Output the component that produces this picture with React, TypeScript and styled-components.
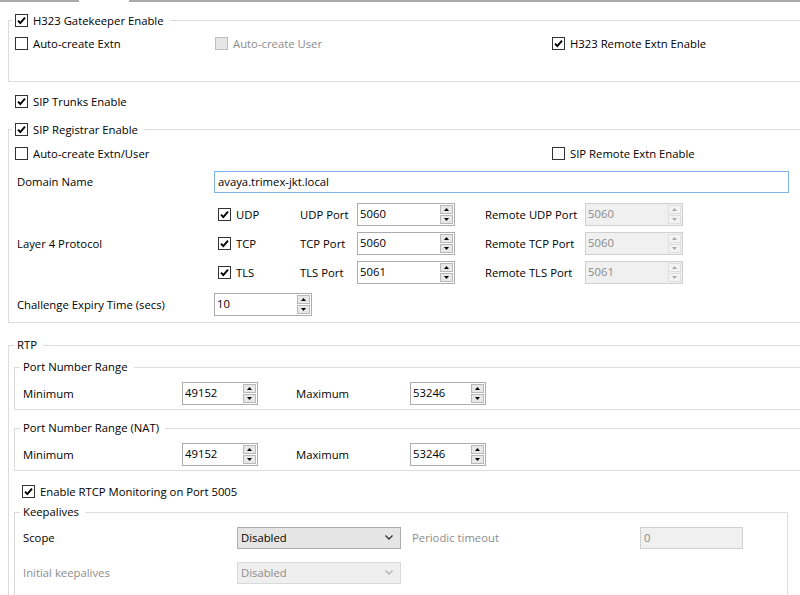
import { Fragment } from 'react';
import styled, { createGlobalStyle } from 'styled-components';

const GlobalStyle = createGlobalStyle`
  *, *::before, *::after {
    box-sizing: border-box;
  }

  html, body {
    margin: 0;
    padding: 0;
    background: #fff;
  }

  body {
    font-family: "Segoe UI", "Open Sans", "Noto Sans", sans-serif;
    font-size: 11.3px;
    color: #000;
    overflow: hidden;
  }
`;

const Page = styled.main`
  display: flex;
  flex-direction: column;
  width: 800px;
  height: 595px;
  overflow: hidden;
`;

const TabStrip = styled.div`
  display: flex;
  flex-shrink: 0;
  height: 2px;
`;

const TabLine = styled.div<{ $w?: number }>`
  height: 2px;
  background: #a9a9a9;
  ${(p) => (p.$w ? `width: ${p.$w}px;` : 'flex: 1;')}
`;

const TabGap = styled.div`
  width: 50px;
`;

/* group boxes */
const OuterGroup = styled.fieldset<{ $mt: number; $pt: number; $pb: number; $pl?: number }>`
  flex-shrink: 0;
  min-width: 0;
  margin: ${(p) => p.$mt}px -40px 0 8px;
  padding: ${(p) => p.$pt}px 0 ${(p) => p.$pb}px ${(p) => p.$pl ?? 6}px;
  border: 1px solid #dcdcdc;
`;

const InnerGroup = styled.fieldset<{ $mt: number; $pt: number; $pb: number; $w?: number }>`
  min-width: 0;
  margin: ${(p) => p.$mt}px 0 0 0;
  padding: ${(p) => p.$pt}px 0 ${(p) => p.$pb}px 8px;
  border: 1px solid #dcdcdc;
  ${(p) => (p.$w ? `width: ${p.$w}px;` : 'margin-right: -40px;')}
`;

const Legend = styled.legend<{ $flush?: boolean }>`
  margin-left: ${(p) => (p.$flush ? 0 : -3)}px;
  padding: 0 6px 0 3px;
  height: 16px;
  line-height: 15px;
`;

/* checkbox */
const CheckLabel = styled.label<{ $disabled?: boolean }>`
  display: inline-flex;
  align-items: center;
  gap: 5px;
  height: 16px;
  line-height: 15px;
  white-space: nowrap;
  color: ${(p) => (p.$disabled ? '#8c8c8c' : '#000')};
`;

const Box = styled.span<{ $disabled?: boolean }>`
  display: inline-flex;
  align-items: center;
  justify-content: center;
  width: 13px;
  height: 13px;
  flex-shrink: 0;
  border: 1px solid ${(p) => (p.$disabled ? '#bcbcbc' : '#333')};
  background: ${(p) => (p.$disabled ? '#e6e6e6' : '#fff')};
`;

function Check({ label, checked, disabled }: { label: string; checked?: boolean; disabled?: boolean }) {
  return (
    <CheckLabel $disabled={disabled}>
      <Box $disabled={disabled}>
        {checked && (
          <svg width="11" height="11" viewBox="0 0 11 11">
            <path d="M2 5.6 L4.3 8 L9 2.6" fill="none" stroke="#000" strokeWidth="1.9" />
          </svg>
        )}
      </Box>
      {label}
    </CheckLabel>
  );
}

/* rows */
const FreeRow = styled.div<{ $mt: number; $pl: number }>`
  display: flex;
  align-items: center;
  flex-shrink: 0;
  height: 16px;
  margin-top: ${(p) => p.$mt}px;
  padding-left: ${(p) => p.$pl}px;
`;

const GridRow = styled.div<{ $cols: string; $h: number; $mt?: number }>`
  display: grid;
  grid-template-columns: ${(p) => p.$cols};
  align-items: center;
  height: ${(p) => p.$h}px;
  margin-top: ${(p) => p.$mt ?? 0}px;
`;

const FieldLabel = styled.span<{ $indent?: number; $disabled?: boolean }>`
  padding-left: ${(p) => p.$indent ?? 0}px;
  padding-bottom: 1px;
  white-space: nowrap;
  color: ${(p) => (p.$disabled ? '#8c8c8c' : '#000')};
`;

const ProtocolGrid = styled.div`
  display: grid;
  grid-template-columns: 199px 86px 57px 98px 130px 98px;
  grid-template-rows: repeat(3, 23px);
  row-gap: 6px;
  align-items: center;
  margin-top: 10px;
`;

const ProtocolLabel = styled(FieldLabel)`
  grid-row: 1 / 4;
`;

const ProtoCheck = styled.div`
  padding-left: 4px;
`;

/* inputs */
const TextBox = styled.div<{ $w: number; $focus?: boolean; $disabled?: boolean }>`
  display: flex;
  align-items: center;
  width: ${(p) => p.$w}px;
  height: 22px;
  padding: 0 0 1px 3px;
  border: 1px solid ${(p) => (p.$focus ? '#7eb4ea' : p.$disabled ? '#d0d0d0' : '#a9a9a9')};
  background: ${(p) => (p.$disabled ? '#f0f0f0' : '#fff')};
  color: ${(p) => (p.$disabled ? '#8a8a8a' : '#000')};
`;

const SpinBox = styled.div<{ $w: number; $disabled?: boolean }>`
  display: flex;
  align-items: center;
  width: ${(p) => p.$w}px;
  height: 23px;
  border: 1px solid ${(p) => (p.$disabled ? '#d0d0d0' : '#acacac')};
  background: ${(p) => (p.$disabled ? '#f0f0f0' : '#fff')};
  color: ${(p) => (p.$disabled ? '#8a8a8a' : '#000')};
`;

const SpinValue = styled.span`
  flex: 1;
  padding: 0 0 2px 2px;
`;

const SpinButtons = styled.div`
  display: flex;
  flex-direction: column;
  gap: 1px;
  margin-right: 1px;
`;

const SpinButton = styled.div<{ $disabled?: boolean }>`
  display: flex;
  align-items: center;
  justify-content: center;
  width: 13px;
  height: 9px;
  border: 1px solid ${(p) => (p.$disabled ? '#dedede' : '#b8b8b8')};
  background: ${(p) => (p.$disabled ? '#f3f3f3' : '#e8e8e8')};
`;

function Arrow({ up, color }: { up?: boolean; color: string }) {
  return (
    <svg width="5" height="3" viewBox="0 0 5 3">
      <polygon points={up ? '0,3 5,3 2.5,0' : '0,0 5,0 2.5,3'} fill={color} />
    </svg>
  );
}

function Spinner({ value, w, disabled }: { value: string; w: number; disabled?: boolean }) {
  const c = disabled ? '#a8a8a8' : '#000';
  return (
    <SpinBox $w={w} $disabled={disabled}>
      <SpinValue>{value}</SpinValue>
      <SpinButtons>
        <SpinButton $disabled={disabled}>
          <Arrow up color={c} />
        </SpinButton>
        <SpinButton $disabled={disabled}>
          <Arrow color={c} />
        </SpinButton>
      </SpinButtons>
    </SpinBox>
  );
}

const SelectBox = styled.div<{ $disabled?: boolean }>`
  display: flex;
  align-items: center;
  justify-content: space-between;
  width: 164px;
  height: 22px;
  padding: 0 7px 1px 3px;
  border: 1px solid ${(p) => (p.$disabled ? '#d9d9d9' : '#acacac')};
  background: ${(p) => (p.$disabled ? '#efefef' : '#e5e5e5')};
  color: ${(p) => (p.$disabled ? '#8d8d8d' : '#000')};
`;

function Select({ value, disabled }: { value: string; disabled?: boolean }) {
  return (
    <SelectBox $disabled={disabled}>
      {value}
      <svg width="8" height="5" viewBox="0 0 8 5">
        <path d="M0.5 0.5 L4 4 L7.5 0.5" fill="none" stroke={disabled ? '#b0b0b0' : '#333'} strokeWidth="1.3" />
      </svg>
    </SelectBox>
  );
}

const protocols = [
  { name: 'UDP', port: '5060' },
  { name: 'TCP', port: '5060' },
  { name: 'TLS', port: '5061' },
];

const RANGE_COLS = '159px 76px 38px 114px 76px';
const KEEP_COLS = '214px 164px 239px 103px';

export default function App() {
  return (
    <Page>
      <GlobalStyle />
      <TabStrip>
        <TabLine $w={79} />
        <TabGap />
        <TabLine />
      </TabStrip>

      <OuterGroup $mt={10} $pt={7} $pb={30}>
        <Legend>
          <Check label="H323 Gatekeeper Enable" checked />
        </Legend>
        <GridRow $cols="200px 337px auto" $h={16}>
          <Check label="Auto-create Extn" />
          <Check label="Auto-create User" disabled />
          <Check label="H323 Remote Extn Enable" checked />
        </GridRow>
      </OuterGroup>

      <FreeRow $mt={11} $pl={15}>
        <Check label="SIP Trunks Enable" checked />
      </FreeRow>

      <OuterGroup $mt={12} $pt={8} $pb={6}>
        <Legend>
          <Check label="SIP Registrar Enable" checked />
        </Legend>
        <GridRow $cols="537px auto" $h={16}>
          <Check label="Auto-create Extn/User" />
          <Check label="SIP Remote Extn Enable" />
        </GridRow>
        <GridRow $cols="199px 575px" $h={22} $mt={10}>
          <FieldLabel $indent={2}>Domain Name</FieldLabel>
          <TextBox $w={575} $focus>
            avaya.trimex-jkt.local
          </TextBox>
        </GridRow>
        <ProtocolGrid>
          <ProtocolLabel $indent={2}>Layer 4 Protocol</ProtocolLabel>
          {protocols.map((pr) => (
            <Fragment key={pr.name}>
              <ProtoCheck>
                <Check label={pr.name} checked />
              </ProtoCheck>
              <FieldLabel>{pr.name} Port</FieldLabel>
              <Spinner value={pr.port} w={98} />
              <FieldLabel $indent={30}>Remote {pr.name} Port</FieldLabel>
              <Spinner value={pr.port} w={98} disabled />
            </Fragment>
          ))}
        </ProtocolGrid>
        <GridRow $cols="199px 98px" $h={23} $mt={9}>
          <FieldLabel $indent={2}>Challenge Expiry Time (secs)</FieldLabel>
          <Spinner value="10" w={98} />
        </GridRow>
      </OuterGroup>

      <OuterGroup $mt={14} $pt={6} $pb={40} $pl={5}>
        <Legend $flush>RTP</Legend>

        <InnerGroup $mt={0} $pt={7} $pb={4}>
          <Legend>Port Number Range</Legend>
          <GridRow $cols={RANGE_COLS} $h={23}>
            <FieldLabel>Minimum</FieldLabel>
            <Spinner value="49152" w={76} />
            <span />
            <FieldLabel>Maximum</FieldLabel>
            <Spinner value="53246" w={76} />
          </GridRow>
        </InnerGroup>

        <InnerGroup $mt={10} $pt={7} $pb={4}>
          <Legend>Port Number Range (NAT)</Legend>
          <GridRow $cols={RANGE_COLS} $h={23}>
            <FieldLabel>Minimum</FieldLabel>
            <Spinner value="49152" w={76} />
            <span />
            <FieldLabel>Maximum</FieldLabel>
            <Spinner value="53246" w={76} />
          </GridRow>
        </InnerGroup>

        <FreeRow $mt={12} $pl={8}>
          <Check label="Enable RTCP Monitoring on Port 5005" checked />
        </FreeRow>

        <InnerGroup $mt={5} $pt={7} $pb={20} $w={774}>
          <Legend>Keepalives</Legend>
          <GridRow $cols={KEEP_COLS} $h={22}>
            <FieldLabel>Scope</FieldLabel>
            <Select value="Disabled" />
            <FieldLabel $indent={11} $disabled>
              Periodic timeout
            </FieldLabel>
            <TextBox $w={103} $disabled>
              0
            </TextBox>
          </GridRow>
          <GridRow $cols={KEEP_COLS} $h={22} $mt={13}>
            <FieldLabel $disabled>Initial keepalives</FieldLabel>
            <Select value="Disabled" disabled />
          </GridRow>
        </InnerGroup>
      </OuterGroup>
    </Page>
  );
}
